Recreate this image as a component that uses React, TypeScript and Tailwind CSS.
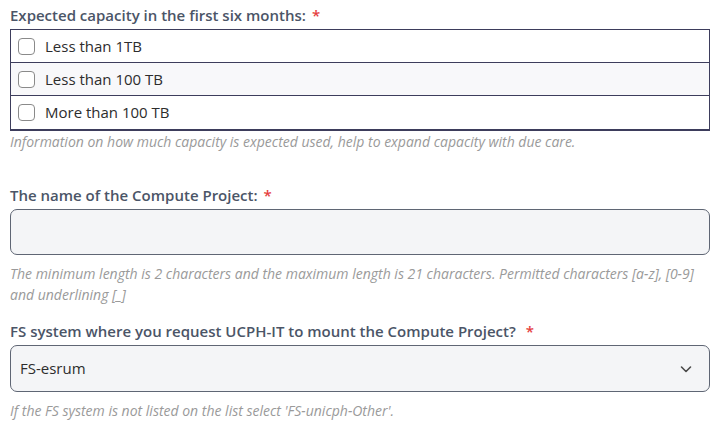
import React from "react";

const font = { fontFamily: '"Open Sans", "Noto Sans", sans-serif' };

function Req() {
  return <span className="text-[#e53e3e] ml-[6px]">*</span>;
}

function CheckRow({ label, shaded, last }: { label: string; shaded?: boolean; last?: boolean }) {
  return (
    <label
      className={`flex items-center h-[33px] px-[7px] gap-[10px] ${shaded ? "bg-[#f8f8fa]" : "bg-white"} ${last ? "" : "border-b border-[#3d3d5c]"}`}
    >
      <span className="w-[17px] h-[17px] rounded-[4px] border-[1.5px] border-[#8a8a8a] bg-white" />
      <span className="text-[15px] text-[#2d2d2d]">{label}</span>
    </label>
  );
}

export default function App() {
  return (
    <div className="bg-white w-[720px] h-[429px] px-[10px] pt-[4px] overflow-hidden" style={font}>
      <div className="text-[15px] font-semibold text-[#4b5567] leading-[22px]">
        Expected capacity in the first six months:<Req />
      </div>
      <div className="mt-[3px] w-[700px] border border-b-2 border-[#3d3d5c]">
        <CheckRow label="Less than 1TB" />
        <CheckRow label="Less than 100 TB" shaded />
        <CheckRow label="More than 100 TB" last />
      </div>
      <div className="text-[14px] italic text-[#9a9a9a] leading-[22px]">
        Information on how much capacity is expected used, help to expand capacity with due care.
      </div>

      <div className="text-[15px] font-semibold text-[#4b5567] leading-[22px] mt-[31px]">
        The name of the Compute Project:<Req />
      </div>
      <div className="mt-[3px] w-[700px] h-[46px] rounded-[7px] border border-[#5f6674] bg-[#f4f5f7]" />
      <div className="text-[14px] italic text-[#9a9a9a] mt-[8px] leading-[21px]">
        The minimum length is 2 characters and the maximum length is 21 characters. Permitted characters [a-z], [0-9]
        <br />
        and underlining [_]
      </div>

      <div className="text-[15px] font-semibold text-[#4b5567] leading-[22px] mt-[15px]">
        FS system where you request UCPH-IT to mount the Compute Project? <Req />
      </div>
      <div className="mt-[3px] w-[700px] h-[47px] rounded-[7px] border border-[#5f6674] bg-[#f4f5f7] flex items-center justify-between pl-[9px] pr-[16px]">
        <span className="text-[15px] text-[#2d2d2d]">FS-esrum</span>
        <svg width="14" height="14" viewBox="0 0 14 14" fill="none">
          <path d="M2.5 5 L7 9.5 L11.5 5" stroke="#4a4a4a" strokeWidth="1.6" strokeLinecap="round" strokeLinejoin="round" />
        </svg>
      </div>
      <div className="text-[14px] italic text-[#9a9a9a] mt-[8px] leading-[22px]">
        If the FS system is not listed on the list select 'FS-unicph-Other'.
      </div>
    </div>
  );
}
